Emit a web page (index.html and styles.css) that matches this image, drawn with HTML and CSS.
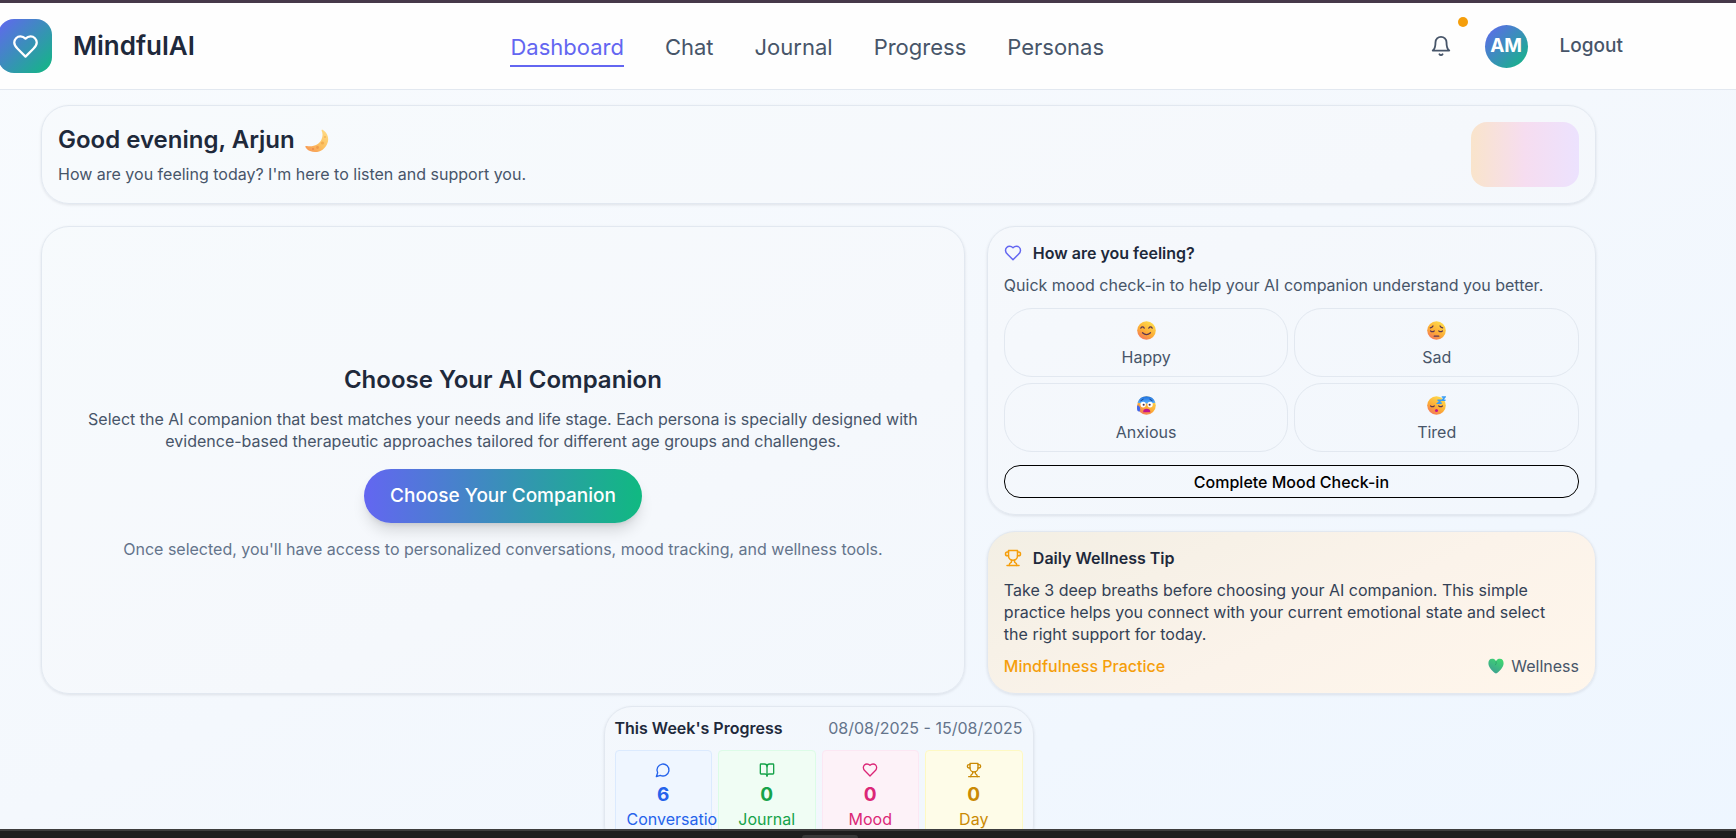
FILE: index.html
```html
<!DOCTYPE html>
<html lang="en">
<head>
<meta charset="utf-8">
<title>MindfulAI</title>
<link rel="stylesheet" href="styles.css">
</head>
<body>
<svg class="defs" aria-hidden="true">
  <defs>
    <linearGradient id="face" x1="0.8" y1="0" x2="0.2" y2="1">
      <stop offset="0" stop-color="#ffe04d"/><stop offset="0.6" stop-color="#fcaa36"/><stop offset="1" stop-color="#f2705f"/>
    </linearGradient>
    <linearGradient id="moon" x1="1" y1="0" x2="0.2" y2="1">
      <stop offset="0" stop-color="#ffdf8a"/><stop offset="0.6" stop-color="#fcc05f"/><stop offset="1" stop-color="#f79a55"/>
    </linearGradient>
    <linearGradient id="green" x1="0.8" y1="0" x2="0.2" y2="1">
      <stop offset="0" stop-color="#3fd870"/><stop offset="1" stop-color="#3d9c93"/>
    </linearGradient>
    <linearGradient id="cold" x1="0" y1="0" x2="0" y2="1">
      <stop offset="0" stop-color="#1c6fe0"/><stop offset="1" stop-color="#5bb4ff"/>
    </linearGradient>
    <symbol id="i-heart" viewBox="0 0 24 24"><path d="M19 14c1.49-1.46 3-3.21 3-5.5A5.5 5.5 0 0 0 16.5 3c-1.76 0-3 .5-4.5 2-1.5-1.5-2.74-2-4.5-2A5.5 5.5 0 0 0 2 8.500c0 2.300 1.500 4.050 3 5.500l7 7Z"/></symbol>
    <symbol id="i-bell" viewBox="0 0 24 24"><path d="M6 8a6 6 0 0 1 12 0c0 7 3 9 3 9H3s3-2 3-9"/><path d="M10.300 21a1.940 1.940 0 0 0 3.400 0"/></symbol>
    <symbol id="i-trophy" viewBox="0 0 24 24"><path d="M6 9H4.500a2.500 2.500 0 0 1 0-5H6"/><path d="M18 9h1.500a2.500 2.500 0 0 0 0-5H18"/><path d="M4 22h16"/><path d="M10 14.660V17c0 .55-.47.98-.97 1.210C7.850 18.750 7 20.240 7 22"/><path d="M14 14.660V17c0 .55.47.98.97 1.210C16.150 18.750 17 20.240 17 22"/><path d="M18 2H6v7a6 6 0 0 0 12 0V2Z"/></symbol>
    <symbol id="i-chat" viewBox="0 0 24 24"><path d="M7.900 20A9 9 0 1 0 4 16.100L2 22Z"/></symbol>
    <symbol id="i-book" viewBox="0 0 24 24"><path d="M12 7v14"/><path d="M3 18a1 1 0 0 1-1-1V4a1 1 0 0 1 1-1h5a4 4 0 0 1 4 4 4 4 0 0 1 4-4h5a1 1 0 0 1 1 1v13a1 1 0 0 1-1 1h-6a3 3 0 0 0-3 3 3 3 0 0 0-3-3z"/></symbol>
  </defs>
</svg>

<div class="window-top"></div>
<header class="topbar">
  <div class="brand">
    <span class="brand-mark"><svg class="icon"><use href="#i-heart"/></svg></span>
    <span class="brand-name">MindfulAI</span>
  </div>
  <nav class="nav">
    <a class="nav-link active" href="#">Dashboard</a>
    <a class="nav-link" href="#">Chat</a>
    <a class="nav-link" href="#">Journal</a>
    <a class="nav-link" href="#">Progress</a>
    <a class="nav-link" href="#">Personas</a>
  </nav>
  <div class="actions">
    <button class="bell" type="button" aria-label="Notifications"><svg class="icon"><use href="#i-bell"/></svg><span class="dot"></span></button>
    <span class="avatar">AM</span>
    <button class="logout" type="button">Logout</button>
  </div>
</header>

<main class="page">
  <section class="card greeting">
    <div>
      <h1 class="title">Good evening, Arjun
        <svg class="moon" viewBox="0 0 24 24"><path d="M17 0.500C22 3 24.500 8.500 22.500 14 20 21.500 12 25 5 22 2.500 21 .8 19.300.2 17.500 1 16.700 2 17 3 17.200 9 18 14.500 15 16.500 10.500 18 7 17.800 4 16.500 1.500Z" fill="url(#moon)"/><circle cx="17.500" cy="14" r="1.600" fill="#f3ad4e"/><circle cx="12.500" cy="18.500" r="1.400" fill="#ef9c4c"/><circle cx="20" cy="8" r="1" fill="#f5b556"/><circle cx="8" cy="20" r="1" fill="#ea8a4a"/></svg>
      </h1>
      <p class="text">How are you feeling today? I'm here to listen and support you.</p>
    </div>
    <div class="swatch"></div>
  </section>

  <div class="columns">
    <section class="card companion">
      <h2 class="title">Choose Your AI Companion</h2>
      <p class="text">Select the AI companion that best matches your needs and life stage. Each persona is specially designed with evidence-based therapeutic approaches tailored for different age groups and challenges.</p>
      <button class="primary" type="button">Choose Your Companion</button>
      <p class="text muted">Once selected, you'll have access to personalized conversations, mood tracking, and wellness tools.</p>
    </section>

    <div class="side">
      <section class="card">
        <h3 class="heading"><svg class="icon violet"><use href="#i-heart"/></svg>How are you feeling?</h3>
        <p class="text mood-text">Quick mood check-in to help your AI companion understand you better.</p>
        <div class="moods">
          <button class="mood" type="button">
            <svg class="emoji" viewBox="0 0 20 20"><circle cx="10" cy="10" r="9.800" fill="url(#face)"/><g fill="none" stroke="#5b3550" stroke-width="1.300" stroke-linecap="round"><path d="M4 7.500Q5.800 5 7.600 7.500M12.400 7.500Q14.200 5 16 7.500M5.800 12.300Q10 16.300 14.200 12.300"/></g></svg>
            Happy
          </button>
          <button class="mood" type="button">
            <svg class="emoji" viewBox="0 0 20 20"><circle cx="10" cy="10" r="9.800" fill="url(#face)"/><g fill="none" stroke="#5b3550" stroke-width="1.300" stroke-linecap="round"><path d="M3.500 7.200Q5.500 6.700 6.300 5.200M16.500 7.200Q14.500 6.700 13.700 5.200M3.800 10.500Q5.700 12 7.600 10.500M12.400 10.500Q14.300 12 16.200 10.500M7.600 16H12.400"/></g></svg>
            Sad
          </button>
          <button class="mood" type="button">
            <svg class="emoji" viewBox="0 0 20 20"><circle cx="10" cy="10" r="9.800" fill="url(#face)"/><path d="M.7 7A9.800 9.800 0 0 1 19.300 7Q10 9 .7 7Z" fill="url(#cold)"/><ellipse cx="6.500" cy="9" rx="2.800" ry="3" fill="#fff"/><ellipse cx="13.800" cy="9" rx="2.800" ry="3" fill="#fff"/><circle cx="7" cy="9.200" r="1.100" fill="#49304d"/><circle cx="13.300" cy="9.200" r="1.100" fill="#49304d"/><path d="M4 5L6.500 3.500M16 5L13.500 3.500" stroke="#17408c" stroke-width="1" stroke-linecap="round"/><path d="M6.500 17Q6.500 13.500 10.200 13.500T14 17Z" fill="#c0128c"/><path d="M0 11Q0 9.500 1.500 10L3 11.500Q4 14.500 2.500 16.500Q0 16.500 0 14Z" fill="#4468e8"/></svg>
            Anxious
          </button>
          <button class="mood" type="button">
            <svg class="emoji" viewBox="0 0 20 20"><circle cx="10" cy="10" r="9.800" fill="url(#face)"/><path d="M3.800 10.500Q5.700 12 7.600 10.500M12.400 10.500Q14.300 12 16.200 10.500" fill="none" stroke="#5b3550" stroke-width="1.300" stroke-linecap="round"/><circle cx="10" cy="15.200" r="1.600" fill="#c0128c"/><path d="M15.500 1H19L16 4.500H19.500M11 4.500H14.500L11.500 7.500H15.500" fill="none" stroke="#3b9df2" stroke-width="1.700"/></svg>
            Tired
          </button>
        </div>
        <button class="outline" type="button">Complete Mood Check-in</button>
      </section>

      <section class="card tip">
        <h3 class="heading"><svg class="icon amber"><use href="#i-trophy"/></svg>Daily Wellness Tip</h3>
        <p class="text tip-text">Take 3 deep breaths before choosing your AI companion. This simple practice helps you connect with your current emotional state and select the right support for today.</p>
        <div class="tip-foot">
          <span class="practice">Mindfulness Practice</span>
          <span class="wellness"><svg class="green-heart" viewBox="0 0 20 20"><path d="M10 4C11 1.500 13 1 14.800 1 18 1 19.500 3.500 19.500 6.500 19.500 12 13.500 17.500 10 19.500 6.500 17.500.5 12 .5 6.500.5 3.500 2 1 5.200 1 7 1 9 1.500 10 4Z" fill="url(#green)"/><path d="M10 4Q11 7 9 9" fill="none" stroke="#2a9f68" stroke-width="1"/></svg>Wellness</span>
        </div>
      </section>
    </div>
  </div>

  <section class="card progress">
    <div class="progress-head">
      <h3 class="heading">This Week's Progress</h3>
      <span class="text muted">08/08/2025 - 15/08/2025</span>
    </div>
    <div class="tiles">
      <div class="tile blue"><svg class="icon"><use href="#i-chat"/></svg><strong class="count">6</strong><span>Conversations</span></div>
      <div class="tile green"><svg class="icon"><use href="#i-book"/></svg><strong class="count">0</strong><span>Journal</span></div>
      <div class="tile pink"><svg class="icon"><use href="#i-heart"/></svg><strong class="count">0</strong><span>Mood</span></div>
      <div class="tile yellow"><svg class="icon"><use href="#i-trophy"/></svg><strong class="count">0</strong><span>Day</span></div>
    </div>
  </section>
</main>
<div class="window-bottom"><div class="handle"></div></div>
</body>
</html>
```
FILE: styles.css
```css
* { box-sizing: border-box; }

body {
  margin: 0;
  height: 100vh;
  display: flex;
  flex-direction: column;
  overflow: hidden;
  font-family: Inter, "Liberation Sans", sans-serif;
  font-size: 16px;
  line-height: 22px;
  color: #475569;
  background: linear-gradient(155deg, #f8fbfe 0%, #f4f8fd 50%, #eef6ff 100%);
}

h1, h2, h3, p { margin: 0; }
button { font: inherit; color: inherit; background: none; border: 0; padding: 0; cursor: pointer; }
.defs { position: absolute; width: 0; height: 0; }
.icon { width: 20px; height: 20px; fill: none; stroke: currentColor; stroke-width: 2; stroke-linecap: round; stroke-linejoin: round; }

.window-top { flex: none; height: 3px; background: #46394a; }

.topbar {
  flex: none;
  display: flex;
  align-items: center;
  justify-content: space-between;
  height: 87px;
  margin-left: -2px;
  padding-right: 113px;
  background: #fefefe;
  border-bottom: 1px solid #e2e8f0;
}
.brand { display: flex; align-items: center; gap: 21px; }
.brand-mark {
  display: grid;
  place-items: center;
  width: 54px;
  height: 54px;
  border-radius: 16px;
  color: #fff;
  background: linear-gradient(135deg, #6366f1, #10b981);
}
.brand-mark .icon { width: 27px; height: 27px; }
.brand-name { font-size: 26px; line-height: 32px; font-weight: 600; color: #1e293b; }

.nav { display: flex; gap: 41px; }
.nav-link {
  padding: 5px 0 2px;
  font-size: 22px;
  line-height: 32px;
  color: #475569;
  text-decoration: none;
  border-bottom: 2px solid transparent;
}
.nav-link.active { color: #6366f1; border-color: #6366f1; }

.actions { display: flex; align-items: center; }
.bell { position: relative; display: grid; place-items: center; width: 43px; height: 43px; }
.bell .icon { width: 22px; height: 22px; }
.dot { position: absolute; top: -8px; right: -5px; width: 10px; height: 10px; border-radius: 50%; background: #f59e0b; }
.avatar {
  display: grid;
  place-items: center;
  width: 43px;
  height: 43px;
  margin: 0 32px 0 22px;
  border-radius: 50%;
  font-size: 19px;
  font-weight: 700;
  color: #fff;
  background: linear-gradient(135deg, #6366f1, #10b981);
}
.logout { font-size: 19px; font-weight: 500; }

.page { flex: 1; min-height: 0; overflow: hidden; padding: 15px 140px 0 41px; }

.card {
  padding: 16px;
  border: 1px solid #e2e8f0;
  border-radius: 28px;
  background: rgba(248, 250, 252, 0.2);
  box-shadow: 0 1px 3px rgba(15, 23, 42, 0.1);
}
.title { font-size: 24px; line-height: 32px; font-weight: 600; color: #1e293b; }
.heading { display: flex; align-items: center; gap: 11px; font-size: 16px; line-height: 20px; font-weight: 600; color: #1e293b; }
.heading .icon { width: 18px; height: 18px; }
.violet { color: #6366f1; }
.amber { color: #f59e0b; }
.muted { color: #64748b; }

.greeting { display: flex; align-items: center; justify-content: space-between; }
.greeting .title { margin-bottom: 7px; }
.moon { width: 24px; height: 24px; margin-left: 4px; vertical-align: -5px; }
.swatch { width: 108px; height: 65px; border-radius: 16px; background: linear-gradient(90deg, #f9e4cb, #f6ddf0 50%, #ece2fe); }

.columns { display: grid; grid-template-columns: 91fr 60fr; gap: 22px; margin-top: 22px; }
.companion { display: flex; flex-direction: column; align-items: center; justify-content: center; padding-top: 20px; text-align: center; }
.companion .title { margin-bottom: 12px; }
.companion .text { max-width: 864px; }
.primary {
  height: 54px;
  margin: 17px 0 15px;
  padding: 0 26px;
  border-radius: 27px;
  font-size: 19px;
  font-weight: 500;
  color: #fff;
  background: linear-gradient(90deg, #6366f1, #10b981);
  box-shadow: 0 10px 15px -3px rgba(0, 0, 0, 0.14), 0 4px 6px -4px rgba(0, 0, 0, 0.14);
}

.side { display: flex; flex-direction: column; gap: 16px; }
.mood-text { margin: 11px 0 12px; }
.moods { display: grid; grid-template-columns: 1fr 1fr; gap: 6px; }
.mood {
  display: flex;
  flex-direction: column;
  align-items: center;
  gap: 6px;
  padding: 12px 10px 8px;
  border: 1px solid #e2e8f0;
  border-radius: 28px;
}
.emoji { width: 19px; height: 19px; }
.outline {
  display: block;
  width: 100%;
  height: 33px;
  margin-top: 13px;
  border: 1px solid #000;
  border-radius: 16px;
  font-weight: 500;
  color: #000;
}

.tip { background: linear-gradient(155deg, #f3efe4, #fbf3ea 55%, #fff6eb); }
.tip-text { margin: 11px 0 10px; padding-right: 16px; color: #334155; }
.tip-foot { display: flex; justify-content: space-between; }
.practice { font-weight: 500; color: #f59e0b; }
.wellness { display: flex; align-items: center; gap: 6px; }
.green-heart { width: 18px; height: 16px; }

.progress { width: 430px; margin: 12px auto 0; padding: 10px; }
.progress-head { display: flex; justify-content: space-between; margin-bottom: 11px; }
.tiles { display: grid; grid-template-columns: repeat(4, minmax(0, 1fr)); gap: 6px; }
.tile {
  display: flex;
  flex-direction: column;
  align-items: center;
  padding: 11px;
  border: 1px solid;
  border-radius: 4px;
}
.tile .icon { width: 16px; height: 16px; }
.count { margin: 5px 0 1px; font-size: 19px; line-height: 24px; font-weight: 700; }
.blue { align-items: stretch; text-align: center; color: #2563eb; background: #eff6ff; border-color: #dbeafe; }
.blue .icon { align-self: center; }
.green { color: #16a34a; background: #f0fdf4; border-color: #dcfce7; }
.pink { color: #db2777; background: #fdf2f8; border-color: #fce7f3; }
.yellow { color: #ca8a04; background: #fefce8; border-color: #fef9c3; }

.window-bottom { flex: none; height: 9px; padding-top: 4px; background: #1e1e1e; border-top: 2px solid #3d3d3d; }
.handle { width: 56px; height: 3px; margin: 0 auto; border-radius: 6px 6px 0 0; background: #393939; transform: translateX(-38px); }
```
